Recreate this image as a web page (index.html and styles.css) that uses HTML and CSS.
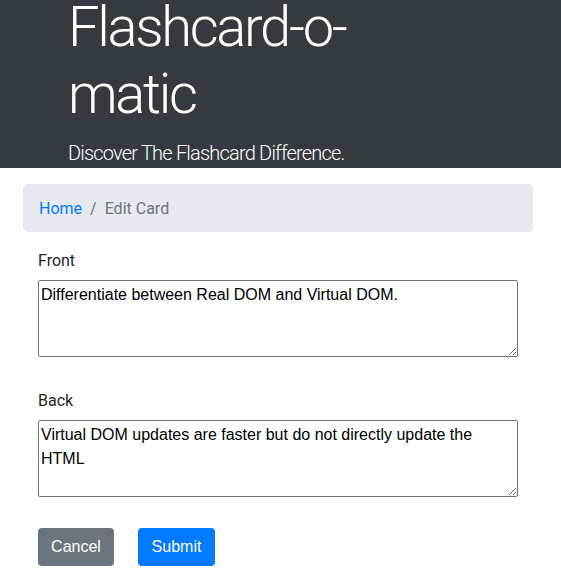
FILE: index.html
```html
<!DOCTYPE html>
<html lang="en">
<head>
<meta charset="utf-8">
<title>Flashcard-o-matic</title>
<link rel="stylesheet" href="styles.css">
</head>
<body>
<header class="hero">
  <div class="hero-inner">
    <h1 class="hero-title">Flashcard-o-matic</h1>
    <p class="hero-lead">Discover The Flashcard Difference.</p>
  </div>
</header>
<main class="page">
  <nav class="crumbs">
    <a class="crumb-link" href="#">Home</a>
    <span class="crumb-sep">/</span>
    <span class="crumb-current">Edit Card</span>
  </nav>
  <form class="card-form">
    <div class="field">
      <label class="field-label" for="front">Front</label>
      <textarea id="front" class="field-input">Differentiate between Real DOM and Virtual DOM.</textarea>
    </div>
    <div class="field">
      <label class="field-label" for="back">Back</label>
      <textarea id="back" class="field-input">Virtual DOM updates are faster but do not directly update the HTML</textarea>
    </div>
    <div class="actions">
      <button type="button" class="btn btn-cancel">Cancel</button>
      <button type="submit" class="btn btn-submit">Submit</button>
    </div>
  </form>
</main>
</body>
</html>
```
FILE: styles.css
```css
html, body {
  margin: 0;
  padding: 0;
  background: #ffffff;
}
body {
  font-family: Roboto, "Noto Sans", sans-serif;
  color: #212529;
  overflow: hidden;
}
.hero {
  background: #343a40;
  color: #ffffff;
  height: 168px;
  overflow: hidden;
}
.hero-inner {
  padding-left: 68px;
  width: 290px;
  margin-top: -6px;
}
.hero-title {
  margin: 0 0 10px;
  font-size: 56px;
  font-weight: 300;
  line-height: 67px;
  letter-spacing: -2.3px;
}
.hero-lead {
  margin: 0;
  font-size: 20px;
  font-weight: 300;
  line-height: 30px;
  letter-spacing: -0.8px;
  white-space: nowrap;
}
.page {
  padding: 16px 28px 0 23px;
}
.crumbs {
  background: #e6e9ed;
  border-radius: 5px;
  padding: 13px 16px 11px;
  height: 24px;
  display: flex;
  align-items: center;
  font-size: 16px;
  line-height: 24px;
}
.crumb-link {
  color: #007bff;
  text-decoration: none;
}
.crumb-sep {
  color: #6c757d;
  padding: 0 8px;
}
.crumb-current {
  color: #6c757d;
}
.card-form {
  padding: 16px 15px 0 15px;
}
.field {
  display: flex;
  flex-direction: column;
  margin-bottom: 31px;
}
.field-label {
  font-size: 16px;
  line-height: 24px;
  padding-top: 1px;
  margin-bottom: 7px;
  color: #212529;
}
.field-input {
  box-sizing: border-box;
  width: 480px;
  height: 77px;
  margin: 0;
  padding: 2px 2px;
  border: 1px solid #767676;
  border-radius: 2px;
  font-family: "Liberation Sans", Arial, sans-serif;
  font-size: 16px;
  line-height: 24px;
  color: #000000;
  resize: vertical;
}
.actions {
  display: flex;
  gap: 24px;
}
.btn {
  box-sizing: border-box;
  height: 38px;
  padding: 0 12px;
  border: none;
  border-radius: 4px;
  color: #ffffff;
  font-family: "Liberation Sans", Arial, sans-serif;
  font-size: 16px;
  line-height: 38px;
}
.btn-cancel {
  background: #6c757d;
  width: 76px;
}
.btn-submit {
  background: #007bff;
  width: 77px;
}
```
